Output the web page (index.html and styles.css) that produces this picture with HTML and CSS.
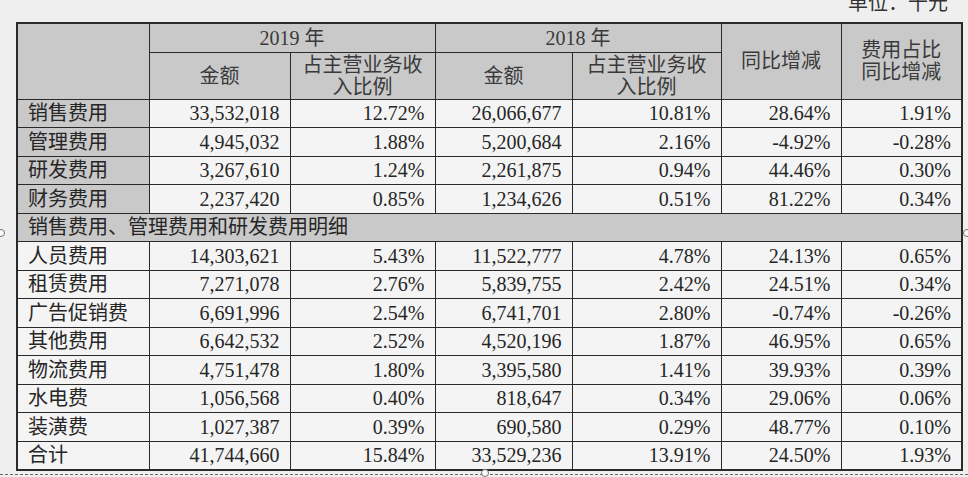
FILE: index.html
```html
<!DOCTYPE html>
<html lang="zh">
<head>
<meta charset="utf-8">
<link rel="stylesheet" href="styles.css">
</head>
<body>
<div class="page">
  <div class="unit">单位：千元</div>
  <table class="fin">
    <colgroup>
      <col class="c1"><col class="c2"><col class="c3"><col class="c4"><col class="c5"><col class="c6"><col class="c7">
    </colgroup>
    <thead>
      <tr class="h1">
        <th rowspan="2"></th>
        <th colspan="2">2019 年</th>
        <th colspan="2">2018 年</th>
        <th rowspan="2">同比增减</th>
        <th rowspan="2">费用占比<br>同比增减</th>
      </tr>
      <tr class="h2">
        <th>金额</th>
        <th>占主营业务收<br>入比例</th>
        <th>金额</th>
        <th>占主营业务收<br>入比例</th>
      </tr>
    </thead>
    <tbody>
      <tr><td class="lbl g">销售费用</td><td>33,532,018</td><td>12.72%</td><td>26,066,677</td><td>10.81%</td><td>28.64%</td><td>1.91%</td></tr>
      <tr><td class="lbl g">管理费用</td><td>4,945,032</td><td>1.88%</td><td>5,200,684</td><td>2.16%</td><td>-4.92%</td><td>-0.28%</td></tr>
      <tr><td class="lbl g">研发费用</td><td>3,267,610</td><td>1.24%</td><td>2,261,875</td><td>0.94%</td><td>44.46%</td><td>0.30%</td></tr>
      <tr><td class="lbl g">财务费用</td><td>2,237,420</td><td>0.85%</td><td>1,234,626</td><td>0.51%</td><td>81.22%</td><td>0.34%</td></tr>
      <tr><td class="lbl g sect" colspan="7">销售费用、管理费用和研发费用明细</td></tr>
      <tr><td class="lbl">人员费用</td><td>14,303,621</td><td>5.43%</td><td>11,522,777</td><td>4.78%</td><td>24.13%</td><td>0.65%</td></tr>
      <tr><td class="lbl">租赁费用</td><td>7,271,078</td><td>2.76%</td><td>5,839,755</td><td>2.42%</td><td>24.51%</td><td>0.34%</td></tr>
      <tr><td class="lbl">广告促销费</td><td>6,691,996</td><td>2.54%</td><td>6,741,701</td><td>2.80%</td><td>-0.74%</td><td>-0.26%</td></tr>
      <tr><td class="lbl">其他费用</td><td>6,642,532</td><td>2.52%</td><td>4,520,196</td><td>1.87%</td><td>46.95%</td><td>0.65%</td></tr>
      <tr><td class="lbl">物流费用</td><td>4,751,478</td><td>1.80%</td><td>3,395,580</td><td>1.41%</td><td>39.93%</td><td>0.39%</td></tr>
      <tr><td class="lbl">水电费</td><td>1,056,568</td><td>0.40%</td><td>818,647</td><td>0.34%</td><td>29.06%</td><td>0.06%</td></tr>
      <tr><td class="lbl">装潢费</td><td>1,027,387</td><td>0.39%</td><td>690,580</td><td>0.29%</td><td>48.77%</td><td>0.10%</td></tr>
      <tr><td class="lbl">合计</td><td>41,744,660</td><td>15.84%</td><td>33,529,236</td><td>13.91%</td><td>24.50%</td><td>1.93%</td></tr>
    </tbody>
  </table>
  <div class="frame"></div>
  <span class="handle hl"></span>
  <span class="handle hr"></span>
  <span class="handle hb"></span>
</div>
</body>
</html>
```
FILE: styles.css
```css
html, body {
  margin: 0;
  padding: 0;
  background: #efefef;
}
.page {
  position: relative;
  width: 968px;
  height: 477px;
  overflow: hidden;
  font-family: "Liberation Serif", "Noto Sans CJK SC", serif;
  font-size: 20px;
  color: #262626;
}
.unit {
  height: 22px;
  line-height: 6px;
  text-align: right;
  padding-right: 20px;
  box-sizing: border-box;
  color: #333;
}
.fin {
  margin-left: 16px;
  border-collapse: collapse;
  table-layout: fixed;
  width: 945px;
  border: 2px solid #2a2a2a;
}
.c1 { width: 132px; }
.c2 { width: 141px; }
.c3 { width: 145px; }
.c4 { width: 137px; }
.c5 { width: 149px; }
.c6 { width: 120px; }
.c7 { width: 121px; }
.fin th, .fin td {
  border: 1px solid #2a2a2a;
  padding: 0 10px;
  white-space: nowrap;
}
.fin th {
  background: #c9c9c9;
  font-weight: normal;
  text-align: center;
  line-height: 22px;
  color: #3a3a3a;
}
.h1 { height: 29px; }
.h2 { height: 47px; }
.fin td {
  background: #f4f4f4;
  text-align: right;
  height: 27.5px;
  line-height: 22px;
}
.fin td.lbl {
  text-align: left;
  padding-left: 10px;
}
.fin td.g {
  background: #c9c9c9;
}
.frame {
  position: absolute;
  left: 0;
  right: 0;
  top: 474px;
  border-top: 1px dashed #666;
}
.handle {
  position: absolute;
  width: 6px;
  height: 6px;
  border: 1px solid #777;
  border-radius: 50%;
  background: #fafafa;
}
.hl { left: -3px; top: 229px; }
.hr { left: 963px; top: 229px; }
.hb { left: 481px; top: 469px; }
```
